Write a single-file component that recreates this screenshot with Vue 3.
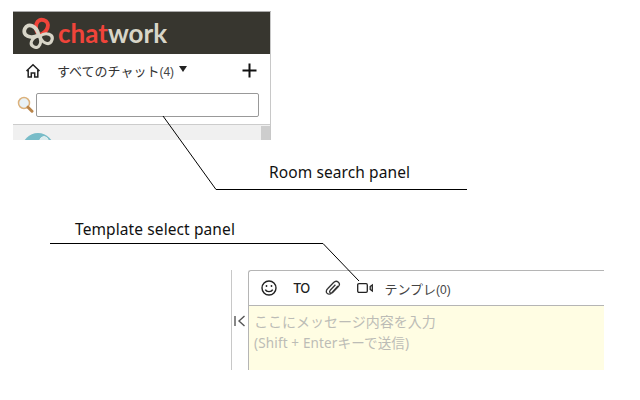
<template>
  <div class="canvas">
    <section class="room-panel">
      <header class="brand">
        <svg class="logo" width="32" height="32" viewBox="0 0 32 32" fill="none" stroke-width="3" stroke="#d8d5c8">
          <path transform="translate(17 18) rotate(18) scale(1.3)" stroke="#f0443a" d="M0 0 C-6 -4 -6 -12 0 -12 C6 -12 6 -4 0 0Z" />
          <path transform="translate(16.5 18) rotate(-65) scale(1.25)" d="M0 0 C-6 -4 -6 -12 0 -12 C6 -12 6 -4 0 0Z" />
          <path transform="translate(17 19) rotate(205) scale(1.0)" d="M0 0 C-6 -4 -6 -12 0 -12 C6 -12 6 -4 0 0Z" />
          <path transform="translate(18 19) rotate(110) scale(1.05)" d="M0 0 C-6 -4 -6 -12 0 -12 C6 -12 6 -4 0 0Z" />
        </svg>
        <span class="wordmark"><span class="red">chat</span><span>work</span></span>
      </header>
      <div class="nav-row">
        <svg class="home" width="16" height="16" viewBox="0 0 16 16" fill="none" stroke="#222" stroke-width="1.5">
          <path d="M1.5 8 L8 1.8 L14.5 8 M3.2 7 V14 H6.3 V10 H9.7 V14 H12.8 V7" />
        </svg>
        <span class="filter">すべてのチャット<small>(4)</small></span>
        <span class="caret"></span>
        <svg class="plus" width="15" height="15" viewBox="0 0 15 15" stroke="#111" stroke-width="2"><path d="M7.5 0.5 V14.5 M0.5 7.5 H14.5" /></svg>
      </div>
      <div class="search-row">
        <svg width="17" height="18" viewBox="0 0 17 18" fill="none">
          <circle cx="7" cy="7" r="5.5" fill="#e9f2f6" stroke="#dcb27c" stroke-width="1.5" />
          <path d="M11 11.2 L15 15.2" stroke="#b98449" stroke-width="3" stroke-linecap="round" />
        </svg>
        <input class="search" type="text" />
      </div>
      <div class="list">
        <span class="avatar"></span>
        <span class="scrollbar"></span>
      </div>
    </section>

    <p class="label room-label">Room search panel</p>
    <p class="label template-label">Template select panel</p>

    <div class="divider"></div>
    <button class="collapse" type="button" aria-label="collapse">
      <svg width="12" height="12" viewBox="0 0 12 12" fill="none" stroke="#555" stroke-width="1.4"><path d="M1 1 V11 M10.5 1 L5 6 L10.5 11" /></svg>
    </button>

    <section class="composer">
      <div class="toolbar">
        <svg width="16" height="16" viewBox="0 0 16 16" fill="none" stroke="#222" stroke-width="1.4">
          <circle cx="8" cy="8" r="7" />
          <circle cx="5.5" cy="6" r="0.9" fill="#222" stroke="none" />
          <circle cx="10.5" cy="6" r="0.9" fill="#222" stroke="none" />
          <path d="M4.3 9.6 C5.5 12.3 10.5 12.3 11.7 9.6" />
        </svg>
        <span class="to">TO</span>
        <svg class="clip" width="16" height="16" viewBox="0 0 16 16" fill="none" stroke="#333" stroke-width="1.3">
          <path d="M13 6 L6.6 13 C5 14.7 2.6 14.3 1.8 13 C1 11.7 1.4 10 2.6 8.8 L8.6 2.5 C10 1 12 1 13.4 2.2 C14.7 3.5 14.6 5.3 13.4 6.6 L7.6 12.6 C6.8 13.4 5.6 13.3 5 12.6 C4.4 11.9 4.6 11 5.2 10.3 L10.4 4.8" />
        </svg>
        <svg class="video" width="16" height="10" viewBox="0 0 16 10" fill="none" stroke="#222" stroke-width="1.3">
          <rect x="0.7" y="0.7" width="9.6" height="8.6" rx="1.2" />
          <path d="M13.2 3.5 L15.3 2 V8 L13.2 6.5 Z" />
        </svg>
        <span class="template">テンプレ<small>(0)</small></span>
      </div>
      <div class="message">
        <div class="placeholder-main">ここにメッセージ内容を入力</div>
        <div class="placeholder-sub">(Shift + Enterキーで送信)</div>
      </div>
    </section>

    <svg class="leaders" width="640" height="400" fill="none" stroke="#000" stroke-width="1">
      <path d="M163 116 L216 189.5 H467" />
      <path d="M50 243.5 H323 L359 281" />
    </svg>
  </div>
</template>

<script setup>
</script>

<style>
html, body { margin: 0; background: #fff; }
</style>

<style scoped>
.canvas {
  position: relative;
  width: 640px;
  height: 400px;
  overflow: hidden;
  background: #fff;
  font-family: "Noto Sans CJK JP", "Noto Sans", sans-serif;
}
.room-panel {
  position: absolute;
  left: 13px;
  top: 11px;
  width: 258px;
  height: 129px;
  box-sizing: border-box;
  border-top: 1px solid #aaa;
  border-right: 1px solid #c8c8c8;
  display: flex;
  flex-direction: column;
  overflow: hidden;
}
.brand {
  height: 42px;
  flex: none;
  background: #37362f;
  display: flex;
  align-items: center;
  gap: 4px;
  padding-left: 9px;
}
.logo { flex: none; }
.wordmark {
  font-family: Lato, "Noto Sans", sans-serif;
  font-weight: 700;
  font-size: 26px;
  line-height: 1;
  color: #d8d5c8;
}
.red { color: #f0443a; }
.nav-row {
  height: 33px;
  flex: none;
  display: flex;
  align-items: center;
  padding-left: 12px;
  padding-bottom: 1px;
}
.filter {
  margin-left: 16px;
  font-size: 13px;
  color: #333;
  line-height: 1;
}
.filter small { font-size: 12px; font-family: "Liberation Sans", sans-serif; color: #444; }
.caret {
  margin-left: 5px;
  margin-bottom: 3px;
  border-left: 4px solid transparent;
  border-right: 4px solid transparent;
  border-top: 6px solid #222;
}
.plus { margin-left: auto; margin-right: 13px; }
.search-row {
  height: 24px;
  flex: none;
  margin-top: 5px;
  display: flex;
  align-items: center;
  padding-left: 4px;
  gap: 2px;
}
.search {
  width: 223px;
  height: 24px;
  box-sizing: border-box;
  border: 1px solid #999;
  border-radius: 2px;
  background: #fff;
  padding: 0;
  margin: 0;
}
.list {
  margin-top: 7px;
  flex: 1;
  border-top: 1px solid #ccc;
  background: #f0f0f0;
  position: relative;
  overflow: hidden;
}
.avatar {
  position: absolute;
  left: 9px;
  top: 8px;
  width: 32px;
  height: 32px;
  border-radius: 50%;
  background: radial-gradient(circle at 22px 8px, #dcecee 4.5px, transparent 5px), #78bcc8;
}
.scrollbar {
  position: absolute;
  right: 0;
  top: 1px;
  bottom: 0;
  width: 9px;
  background: #cdcdcd;
}
.label {
  position: absolute;
  margin: 0;
  font-family: "Noto Sans", sans-serif;
  font-size: 15.5px;
  letter-spacing: 0.1px;
  line-height: 18px;
  color: #111;
  white-space: nowrap;
}
.room-label { left: 269px; top: 163px; }
.template-label { left: 75px; top: 220px; }
.divider {
  position: absolute;
  left: 231px;
  top: 270px;
  width: 1px;
  height: 100px;
  background: #c8c8c8;
}
.collapse {
  position: absolute;
  left: 234px;
  top: 315px;
  padding: 0;
  border: 0;
  background: none;
  display: flex;
}
.composer {
  position: absolute;
  left: 248px;
  top: 270px;
  width: 356px;
  height: 100px;
  box-sizing: border-box;
  border-top: 1px solid #b5b5b5;
  border-left: 1px solid #b5b5b5;
  border-top-left-radius: 3px;
  display: flex;
  flex-direction: column;
}
.toolbar {
  height: 35px;
  flex: none;
  box-sizing: border-box;
  border-bottom: 1px solid #b5b5b5;
  display: flex;
  align-items: center;
  padding-left: 12px;
}
.to {
  margin-left: 16px;
  font-family: Inter, sans-serif;
  font-weight: 500;
  font-size: 13px;
  letter-spacing: -0.8px;
  color: #222;
}
.clip { margin-left: 16px; }
.video { margin-left: 16px; margin-top: -1px; }
.template {
  margin-left: 11px;
  font-size: 13px;
  color: #444;
}
.template small { font-size: 12px; font-family: "Liberation Sans", sans-serif; }
.message {
  flex: 1;
  background: #fffde3;
  padding: 5px 5px;
  color: #bcbcb6;
}
.placeholder-main { font-size: 14px; line-height: 20px; }
.placeholder-sub {
  font-family: "Noto Sans", "Noto Sans CJK JP", sans-serif;
  font-size: 13.5px;
  letter-spacing: 0.15px;
  line-height: 20px;
  margin-top: 2px;
}
.leaders { position: absolute; left: 0; top: 0; pointer-events: none; }
</style>
